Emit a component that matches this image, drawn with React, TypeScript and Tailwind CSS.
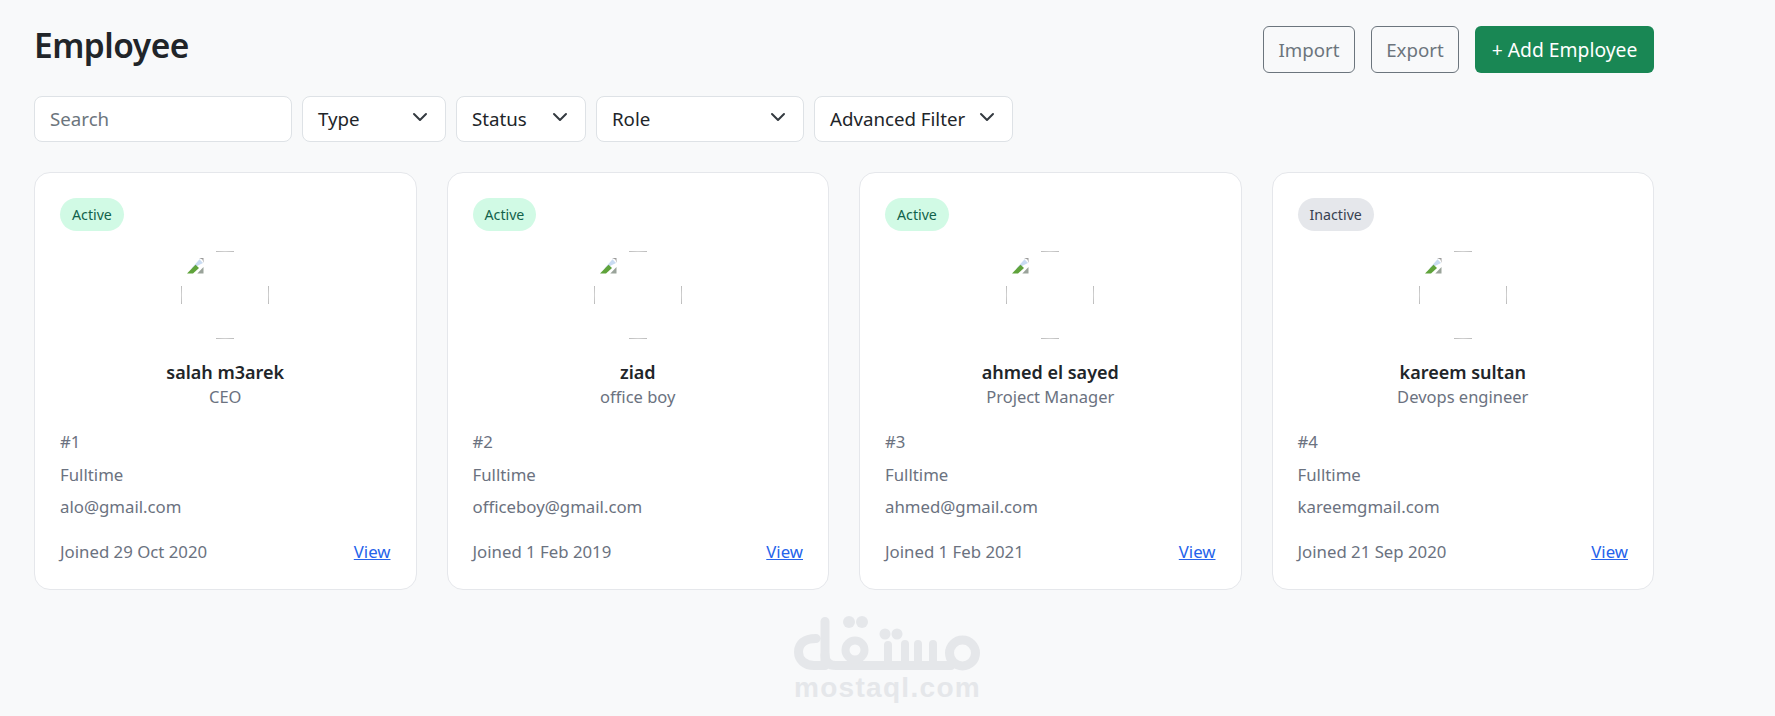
const font = "font-['Noto_Sans','Liberation_Sans',sans-serif]";

function Chevron() {
  return (
    <svg width="16" height="16" viewBox="0 0 16 16" fill="none" stroke="#343a40" strokeWidth="2" strokeLinecap="round" strokeLinejoin="round" className="shrink-0 -mt-1">
      <path d="m2 5 6 6 6-6" />
    </svg>
  );
}

function Select({ label, w }: { label: string; w: string }) {
  return (
    <div className={`${w} h-[46px] flex items-center justify-between pl-[15px] pr-[17px] bg-white border border-[#dee2e6] rounded-lg text-[18.7px] text-[#212529]`}>
      <span className="whitespace-nowrap pt-[1px]">{label}</span>
      <Chevron />
    </div>
  );
}

function BrokenAvatar() {
  return (
    <svg width="88" height="88" viewBox="0 0 88 88" className="block mx-auto">
      <g stroke="#bdbdbd" strokeWidth="1" fill="none">
        <path d="M35 .5c6-.4 12-.4 18 0" />
        <path d="M35 87.500c6 .4 12 .4 18 0" />
        <path d="M.5 35c-.4 6-.4 12 0 18" />
        <path d="M87.500 35c.4 6 .4 12 0 18" />
      </g>
      <path d="M10 18 18.500 8.300 22 12 15 15.500z" fill="#c9dbf2" />
      <path d="M6 22.500 14.500 13.700 18 17 12 22.500z" fill="#5fa33b" />
      <path d="M16.300 22.500H22.500V16z" fill="#9aa39a" />
      <path d="M18 7H22.500V12L21.500 8.500z" fill="#9b9b9b" />
    </svg>
  );
}

type Emp = { name: string; role: string; id: string; email: string; joined: string; active: boolean };

const people: Emp[] = [
  { name: "salah m3arek", role: "CEO", id: "#1", email: "alo@gmail.com", joined: "Joined 29 Oct 2020", active: true },
  { name: "ziad", role: "office boy", id: "#2", email: "officeboy@gmail.com", joined: "Joined 1 Feb 2019", active: true },
  { name: "ahmed el sayed", role: "Project Manager", id: "#3", email: "ahmed@gmail.com", joined: "Joined 1 Feb 2021", active: true },
  { name: "kareem sultan", role: "Devops engineer", id: "#4", email: "kareemgmail.com", joined: "Joined 21 Sep 2020", active: false },
];

function Card({ p }: { p: Emp }) {
  return (
    <div className="h-[418px] bg-white border border-[#e5e7eb] rounded-2xl px-[25px] pt-[25px]">
      <span className={`inline-flex items-center h-[33px] px-[12px] rounded-full text-[14.2px] ${p.active ? "bg-[#d1fae5] text-[#11624b]" : "bg-[#e5e7eb] text-[#374151]"}`}>
        {p.active ? "Active" : "Inactive"}
      </span>
      <div className="mt-[20px]"><BrokenAvatar /></div>
      <div className="mt-[20px] text-center text-[18px] leading-[26px] font-semibold text-[#212529]">{p.name}</div>
      <div className="text-center text-[16.5px] leading-[23px] text-[#6b7280]">{p.role}</div>
      <div className="mt-[22px] flex flex-col gap-[8px] text-[16.8px] leading-[24px] text-[#6b7280]">
        <div>{p.id}</div>
        <div className="pt-[1px]">Fulltime</div>
        <div>{p.email}</div>
      </div>
      <div className="mt-[21px] flex justify-between text-[16.8px] leading-[24px]">
        <span className="text-[#6b7280]">{p.joined}</span>
        <a className="text-[#2563eb] underline">View</a>
      </div>
    </div>
  );
}

function Watermark() {
  return (
    <div className="absolute left-[794px] top-[615px] w-[186px] text-center pointer-events-none">
      <svg width="186" height="60" viewBox="0 0 186 60" fill="none" stroke="#e5e7ea" strokeWidth="9" strokeLinecap="round" strokeLinejoin="round" className="block">
        <path d="M22 23.500C10 23.500 4.500 29 4.500 37c0 8 6.500 13.500 15.500 13.500h11V6.500" />
        <path d="M31 40c0 7 4 10.500 11 10.500h115" />
        <path d="M94 50V30M111 50V29M124 50V29M139 50V29" strokeWidth="8" />
        <circle cx="61" cy="35" r="9.500" strokeWidth="8" />
        <circle cx="168.500" cy="38" r="13" />
        <g fill="#e5e7ea" stroke="none">
          <circle cx="55" cy="7" r="6" /><circle cx="68" cy="7" r="6" />
          <circle cx="91" cy="19" r="5.500" /><circle cx="103" cy="19" r="5.500" />
        </g>
      </svg>
      <div className="-mt-[2px] text-[28px] leading-[30px] font-bold text-[#e5e7ea] font-['Liberation_Sans',sans-serif] tracking-[1.3px] whitespace-nowrap">mostaql.com</div>
    </div>
  );
}

export default function App() {
  return (
    <div className={`relative min-h-[716px] bg-[#f8f9fa] pl-[34px] pr-[121px] pt-[26px] overflow-hidden ${font}`}>
      <div className="flex justify-between items-start h-[47px]">
        <h1 className="text-[33.5px] leading-[38px] font-semibold text-[#212529] tracking-[-0.5px]">Employee</h1>
        <div className="flex gap-[16px] text-[18.7px]">
          <button className="w-[92px] h-[47px] pt-[1px] border border-[#6c757d] rounded-md text-[#6c757d]">Import</button>
          <button className="w-[88px] h-[47px] pt-[1px] border border-[#6c757d] rounded-md text-[#6c757d]">Export</button>
          <button className="w-[179px] h-[47px] pt-[1px] bg-[#198754] rounded-md text-white text-[19.3px]">+ Add Employee</button>
        </div>
      </div>
      <div className="mt-[23px] flex gap-[10px]">
        <div className="w-[258px] h-[46px] flex items-center pl-[15px] pt-[1px] bg-white border border-[#dee2e6] rounded-lg text-[18.7px] text-[#6c757d]">Search</div>
        <Select label="Type" w="w-[144px]" />
        <Select label="Status" w="w-[130px]" />
        <Select label="Role" w="w-[208px]" />
        <Select label="Advanced Filter" w="w-[199px]" />
      </div>
      <div className="mt-[30px] grid grid-cols-4 gap-[30px]">
        {people.map((p) => <Card key={p.id} p={p} />)}
      </div>
      <Watermark />
    </div>
  );
}
